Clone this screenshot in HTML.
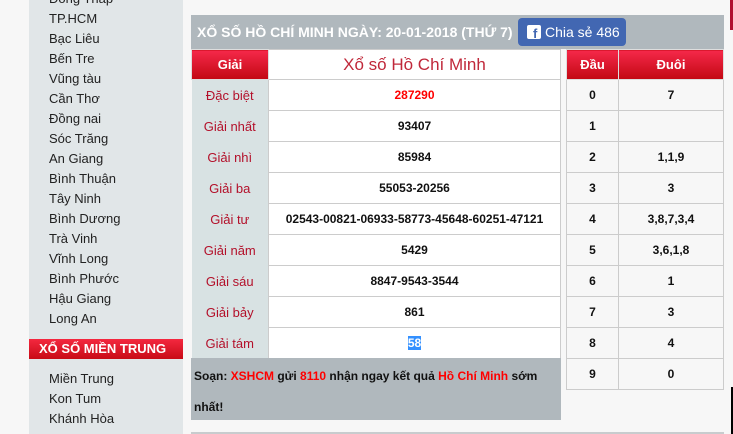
<!DOCTYPE html>
<html><head><meta charset="utf-8"><style>
*{margin:0;padding:0;box-sizing:border-box}
body{width:733px;height:434px;overflow:hidden;background:#f7f7f7;font-family:"Liberation Sans",Arial,sans-serif;position:relative}
.side{position:absolute;left:29px;top:0;width:154px;height:434px;background:#e1e6e8}
.side div.i{position:absolute;left:20px;font-size:13px;color:#222;line-height:20px;margin-top:1px}
.sh{position:absolute;left:0;top:339px;width:154px;height:20px;background:linear-gradient(#f4283f,#c80b16);color:#fff;font-weight:bold;font-size:13px;line-height:20px;padding-left:10px}
.hb{position:absolute;left:191px;top:15px;width:533px;height:34px;background:#b0b8bd}
.ht{position:absolute;left:6px;top:0;line-height:34px;color:#fff;font-weight:bold;font-size:14px}
.fb{position:absolute;left:327px;top:3px;width:108px;height:28px;background:#4267b2;border-radius:4px;color:#fff;font-size:14px;line-height:28px}
.fb span.ic{position:absolute;left:9px;top:7px;width:14px;height:14px;background:#fff;border-radius:2px}
.fb span.ic b{position:absolute;left:6px;top:3px;color:#4267b2;font-size:13px;font-weight:bold;line-height:12px}
.fb span.t{position:absolute;left:27px}
table{border-collapse:collapse;position:absolute}
td{height:31px;text-align:center;font-size:12px;font-weight:bold;color:#111;border:1px solid #ccc}
th{height:30px;background:linear-gradient(#f5284a,#c20812);color:#fff;font-size:13px;border:1px solid #ddd}
#t1{left:191px;top:49px;width:370px}
#t1 td.g{background:#d8e2e3;color:#b3102a;font-weight:normal;font-size:13px;width:77px;border-top:none;border-bottom:none;border-left:none}
#t1 td.v{background:#fff}
#t2{left:566px;top:49px;width:158px}
#t2 td{background:#f7f7f7}
.ft{position:absolute;left:191px;top:358px;width:370px;height:62px;background:#b0b8bd;font-size:12px;font-weight:bold;color:#111;padding:3px 3px;line-height:31px}
.r{color:#f00}
</style></head><body>
<div class="side">
<div class="i" style="top:-12px">Đồng Tháp</div>
<div class="i" style="top:8px">TP.HCM</div>
<div class="i" style="top:28px">Bạc Liêu</div>
<div class="i" style="top:48px">Bến Tre</div>
<div class="i" style="top:68px">Vũng tàu</div>
<div class="i" style="top:88px">Cần Thơ</div>
<div class="i" style="top:108px">Đồng nai</div>
<div class="i" style="top:128px">Sóc Trăng</div>
<div class="i" style="top:148px">An Giang</div>
<div class="i" style="top:168px">Bình Thuận</div>
<div class="i" style="top:188px">Tây Ninh</div>
<div class="i" style="top:208px">Bình Dương</div>
<div class="i" style="top:228px">Trà Vinh</div>
<div class="i" style="top:248px">Vĩnh Long</div>
<div class="i" style="top:268px">Bình Phước</div>
<div class="i" style="top:288px">Hậu Giang</div>
<div class="i" style="top:308px">Long An</div>
<div class="sh">XỔ SỐ MIỀN TRUNG</div>
<div class="i" style="top:368px">Miền Trung</div>
<div class="i" style="top:388px">Kon Tum</div>
<div class="i" style="top:408px">Khánh Hòa</div>
</div>
<div class="hb"><div class="ht">XỔ SỐ HỒ CHÍ MINH NGÀY: 20-01-2018 (THỨ 7)</div>
<div class="fb"><span class="ic"><b>f</b></span><span class="t">Chia sẻ 486</span></div></div>
<table id="t1">
<tr><th style="width:77px">Giải</th><th style="background:#fff;color:#c0283a;font-size:17px;font-weight:normal;border-color:#ccc">Xổ số Hồ Chí Minh</th></tr>
<tr><td class="g">Đặc biệt</td><td class="v" style="color:#f00">287290</td></tr>
<tr><td class="g">Giải nhất</td><td class="v">93407</td></tr>
<tr><td class="g">Giải nhì</td><td class="v">85984</td></tr>
<tr><td class="g">Giải ba</td><td class="v">55053-20256</td></tr>
<tr><td class="g">Giải tư</td><td class="v">02543-00821-06933-58773-45648-60251-47121</td></tr>
<tr><td class="g">Giải năm</td><td class="v">5429</td></tr>
<tr><td class="g">Giải sáu</td><td class="v">8847-9543-3544</td></tr>
<tr><td class="g">Giải bảy</td><td class="v">861</td></tr>
<tr><td class="g">Giải tám</td><td class="v"><span style="background:#3390ff;color:#fff">58</span></td></tr>
</table>
<div class="ft">Soạn: <span class="r">XSHCM</span> gửi <span class="r">8110</span> nhận ngay kết quả <span class="r">Hồ Chí Minh</span> sớm nhất!</div>
<table id="t2">
<tr><th style="width:52px">Đầu</th><th>Đuôi</th></tr>
<tr><td>0</td><td>7</td></tr>
<tr><td>1</td><td></td></tr>
<tr><td>2</td><td>1,1,9</td></tr>
<tr><td>3</td><td>3</td></tr>
<tr><td>4</td><td>3,8,7,3,4</td></tr>
<tr><td>5</td><td>3,6,1,8</td></tr>
<tr><td>6</td><td>1</td></tr>
<tr><td>7</td><td>3</td></tr>
<tr><td>8</td><td>4</td></tr>
<tr><td>9</td><td>0</td></tr>
</table>
<div style="position:absolute;left:191px;top:432px;width:533px;height:2px;background:#c8ccce"></div>
<div style="position:absolute;left:730px;top:0;width:3px;height:30px;background:#b01030"></div>
<div style="position:absolute;left:731px;top:387px;width:2px;height:47px;background:#000"></div>
</body></html>
